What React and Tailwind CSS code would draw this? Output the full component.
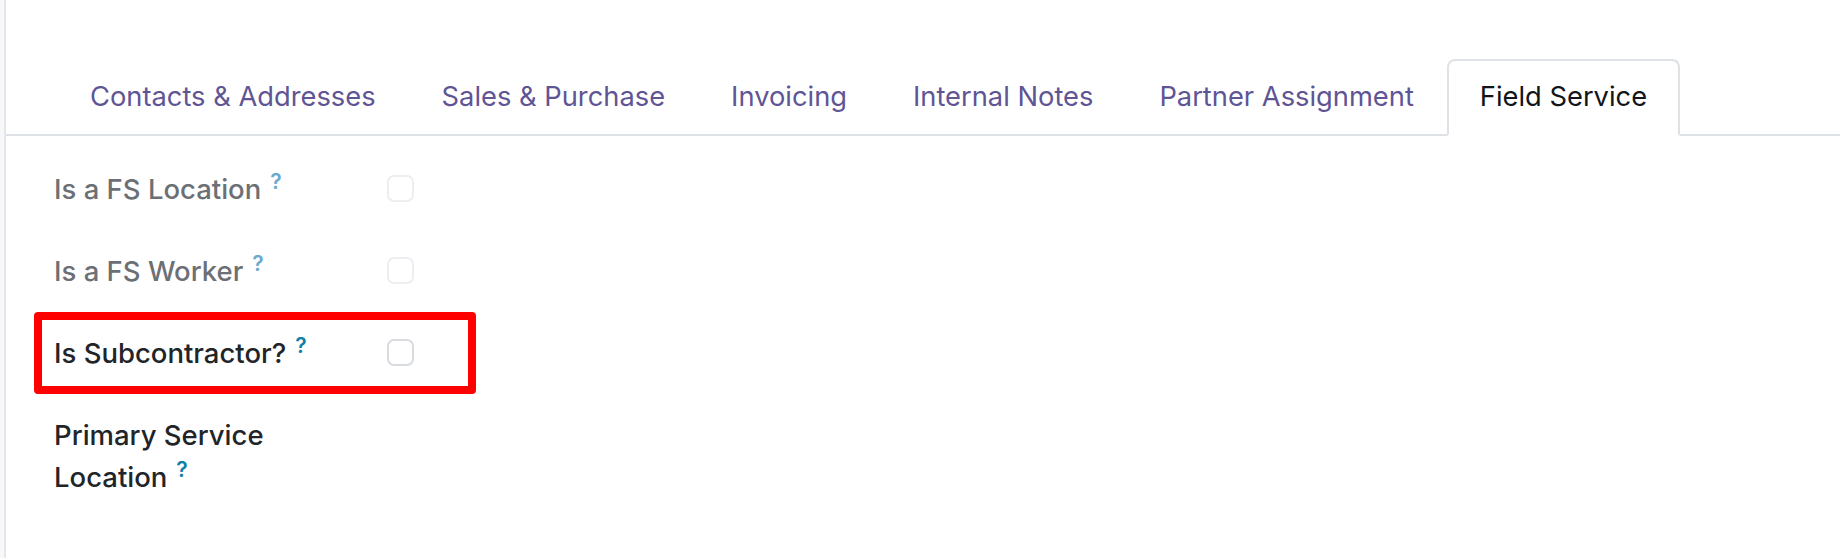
import React from 'react'

const tabs = ['Contacts & Addresses', 'Sales & Purchase', 'Invoicing', 'Internal Notes', 'Partner Assignment', 'Field Service']

function Check({dim}){
  return (
    <div className={'mt-[7px] h-[27px] w-[27px] shrink-0 rounded-[7px] border-2 bg-white ' + (dim ? 'border-[#eceef1]' : 'border-[#d8dbdf]')} />
  )
}

function Help({dim}){
  return (
    <span className={'relative -top-[10px] ml-[9px] inline-block text-[21px] font-semibold leading-none ' + (dim ? 'text-[#6aaacd]' : 'text-[#0f80a8]')}>?</span>
  )
}

export default function App(){
  const active = 'Field Service'
  return (
    <div className="flex h-[558px] w-[1840px] bg-white" style={{fontFamily: 'Inter, "Noto Sans", sans-serif'}}>
      <div className="w-[4px] bg-[#f7f8fa]" />
      <div className="w-[2px] bg-[#e4e6ea]" />
      <div className="relative flex-1">
        {/* tab strip */}
        <div className="mt-[59px] flex border-b-2 border-[#dee2e6] pl-[51px]">
          {tabs.map(t => (
            <div
              key={t}
              className={
                'relative -mb-[2px] flex h-[77px] items-center whitespace-nowrap border-2 px-[31px] pb-[1px] text-[27.3px] ' +
                (t === active
                  ? 'rounded-t-[8px] border-[#dee2e6] border-b-white bg-white text-[#111418]'
                  : 'border-transparent text-[#5f5595]')
              }
            >
              {t}
            </div>
          ))}
        </div>

        {/* fields */}
        <div className="mt-[32px] flex flex-col pl-[48px] text-[27.5px] leading-[42px]">
          <div className="flex h-[82px] items-start">
            <div className="w-[333px] pr-[33px] font-medium text-[#6c7075]">Is a FS Location<Help dim /></div>
            <Check dim />
          </div>
          <div className="flex h-[82px] items-start">
            <div className="w-[333px] pr-[33px] font-medium text-[#6c7075]">Is a FS Worker<Help dim /></div>
            <Check dim />
          </div>
          <div className="flex h-[82px] items-start">
            <div className="w-[333px] pr-[33px] font-medium text-[#212529]">Is Subcontractor?<Help /></div>
            <Check />
          </div>
          <div className="flex items-start">
            <div className="w-[333px] pr-[33px] font-medium text-[#212529]">Primary Service Location<Help /></div>
          </div>
        </div>

        {/* annotation */}
        <div className="absolute left-[28px] top-[312px] h-[82px] w-[442px] rounded-[4px] border-[8px] border-[#ff0000]" />
      </div>
    </div>
  )
}
